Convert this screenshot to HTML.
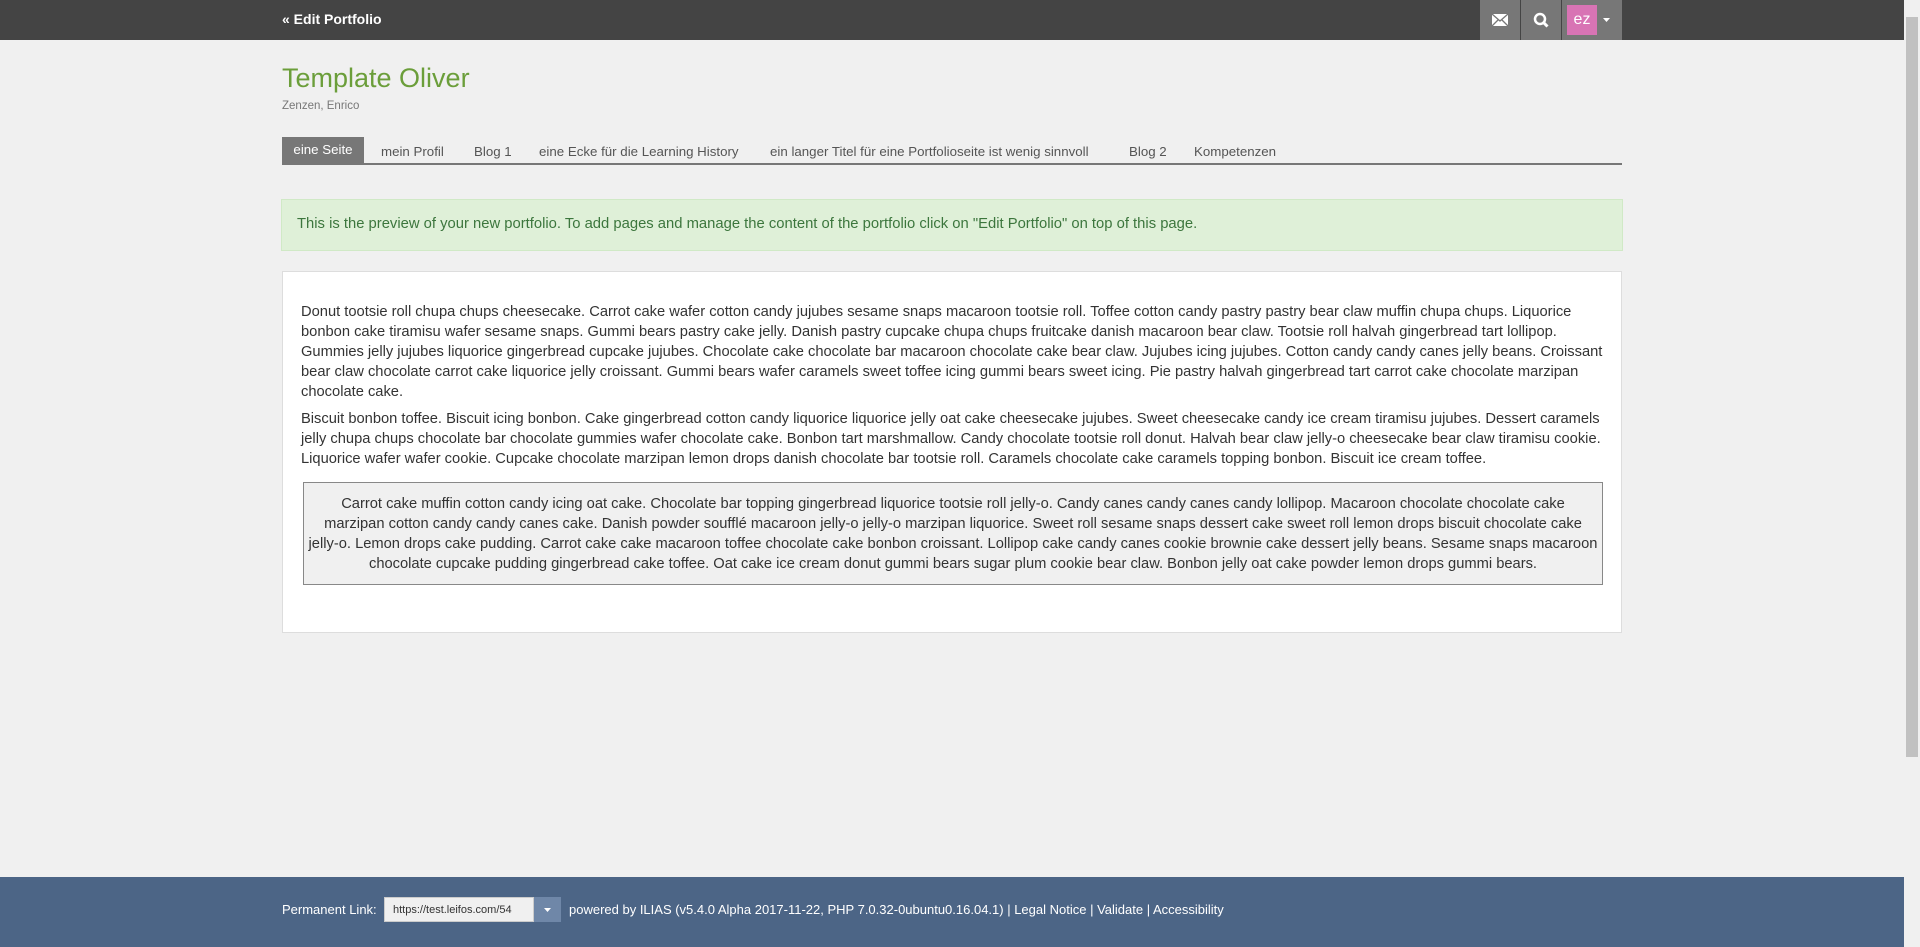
<!DOCTYPE html>
<html><head><meta charset="utf-8"><style>
*{box-sizing:border-box;margin:0;padding:0}
body{width:1920px;height:947px;background:#f0f0f0;font-family:"Liberation Sans",sans-serif;position:relative;overflow:hidden;color:#333}
.top{position:absolute;left:0;top:0;width:1904px;height:40px;background:#444}
.top .ep{position:absolute;left:282px;top:11px;color:#fff;font-weight:bold;font-size:14px}
.btn{position:absolute;top:0;height:40px;background:#777}
.av{position:absolute;left:1567px;top:5px;width:30px;height:30px;background:#d874b4;color:#fff;font-size:16px;text-align:center;line-height:29px}
.sb{position:absolute;right:0;top:0;width:16px;height:947px;background:#f0f0f0}
.sb i{position:absolute;left:2px;top:17px;width:12px;height:740px;background:#c1c1c1}
h1{position:absolute;left:282px;top:63px;font-weight:normal;font-size:27px;color:#6b9e3a}
.sub{position:absolute;left:282px;top:100px;font-size:11.5px;color:#777}
.tabs{position:absolute;left:282px;top:137px;width:1340px;height:28px;border-bottom:2px solid #777;font-size:13.3px;color:#555}
.tabs span{position:absolute;top:7px;white-space:nowrap}
.tabs .act{left:0;top:0;width:82px;height:26px;background:#777;color:#fff;text-align:center;line-height:26px}
.alert{position:absolute;left:281px;top:199px;width:1342px;height:52px;background:#dff0d8;border:1px solid #d0e9c6;color:#3c763d;font-size:14.8px;padding:16px 15px;white-space:nowrap}
.box{position:absolute;left:282px;top:271px;width:1340px;height:362px;background:#fff;border:1px solid #ddd}
.p{position:absolute;left:18px;font-size:14.7px;line-height:20px;white-space:nowrap;color:#333}
.bq{position:absolute;left:20px;top:210px;width:1300px;height:103px;background:#f0f0f0;border:1px solid #888;font-size:14.7px;line-height:20px;text-align:center;padding-top:11px;white-space:nowrap}
.foot{position:absolute;left:0;top:877px;width:1904px;height:70px;background:#4c6586;color:#fff;font-size:13px}
.foot .t{position:absolute;top:25px;white-space:nowrap}
.inp{position:absolute;left:384px;top:20px;width:150px;height:25px;background:#f0f0f0;border:1px solid #ccc;color:#333;font-size:11px;padding:6px 0 0 8px;overflow:hidden;white-space:nowrap}
.dd{position:absolute;left:534px;top:20px;width:27px;height:25px;background:#6f87a8}
</style></head><body>
<div class="top">
<div class="ep">« Edit Portfolio</div>
<div class="btn" style="left:1480px;width:40px"><svg width="40" height="40"><path d="M12 14h16v12H12z" fill="#fff"/><path d="M12 14l8 7 8-7M12 26l6-6M28 26l-6-6" stroke="#777" stroke-width="1.3" fill="none"/></svg></div>
<div class="btn" style="left:1521px;width:40px"><svg width="40" height="40"><circle cx="19" cy="19" r="5" stroke="#fff" stroke-width="2.5" fill="none"/><path d="M22.5 22.5l4 4" stroke="#fff" stroke-width="3"/></svg></div>
<div class="btn" style="left:1562px;width:60px"><svg style="position:absolute;left:40px;top:17px" width="10" height="6"><path d="M1 1h7l-3.5 4z" fill="#fff"/></svg></div>
<div class="av">ez</div>
</div>
<div class="sb"><i></i></div>
<h1>Template Oliver</h1>
<div class="sub">Zenzen, Enrico</div>
<div class="tabs">
<span class="act">eine Seite</span>
<span style="left:99px">mein Profil</span>
<span style="left:192px">Blog 1</span>
<span style="left:257px">eine Ecke für die Learning History</span>
<span style="left:488px">ein langer Titel für eine Portfolioseite ist wenig sinnvoll</span>
<span style="left:847px">Blog 2</span>
<span style="left:912px">Kompetenzen</span>
</div>
<div class="alert">This is the preview of your new portfolio. To add pages and manage the content of the portfolio click on "Edit Portfolio" on top of this page.</div>
<div class="box">
<div class="p" style="top:30px">Donut tootsie roll chupa chups cheesecake. Carrot cake wafer cotton candy jujubes sesame snaps macaroon tootsie roll. Toffee cotton candy pastry pastry bear claw muffin chupa chups. Liquorice<br>bonbon cake tiramisu wafer sesame snaps. Gummi bears pastry cake jelly. Danish pastry cupcake chupa chups fruitcake danish macaroon bear claw. Tootsie roll halvah gingerbread tart lollipop.<br>Gummies jelly jujubes liquorice gingerbread cupcake jujubes. Chocolate cake chocolate bar macaroon chocolate cake bear claw. Jujubes icing jujubes. Cotton candy candy canes jelly beans. Croissant<br>bear claw chocolate carrot cake liquorice jelly croissant. Gummi bears wafer caramels sweet toffee icing gummi bears sweet icing. Pie pastry halvah gingerbread tart carrot cake chocolate marzipan<br>chocolate cake.</div>
<div class="p" style="top:137px">Biscuit bonbon toffee. Biscuit icing bonbon. Cake gingerbread cotton candy liquorice liquorice jelly oat cake cheesecake jujubes. Sweet cheesecake candy ice cream tiramisu jujubes. Dessert caramels<br>jelly chupa chups chocolate bar chocolate gummies wafer chocolate cake. Bonbon tart marshmallow. Candy chocolate tootsie roll donut. Halvah bear claw jelly-o cheesecake bear claw tiramisu cookie.<br>Liquorice wafer wafer cookie. Cupcake chocolate marzipan lemon drops danish chocolate bar tootsie roll. Caramels chocolate cake caramels topping bonbon. Biscuit ice cream toffee.</div>
<div class="bq">Carrot cake muffin cotton candy icing oat cake. Chocolate bar topping gingerbread liquorice tootsie roll jelly-o. Candy canes candy canes candy lollipop. Macaroon chocolate chocolate cake<br>marzipan cotton candy candy canes cake. Danish powder soufflé macaroon jelly-o jelly-o marzipan liquorice. Sweet roll sesame snaps dessert cake sweet roll lemon drops biscuit chocolate cake<br>jelly-o. Lemon drops cake pudding. Carrot cake cake macaroon toffee chocolate cake bonbon croissant. Lollipop cake candy canes cookie brownie cake dessert jelly beans. Sesame snaps macaroon<br>chocolate cupcake pudding gingerbread cake toffee. Oat cake ice cream donut gummi bears sugar plum cookie bear claw. Bonbon jelly oat cake powder lemon drops gummi bears.</div>
</div>
<div class="foot">
<div class="t" style="left:282px">Permanent Link:</div>
<div class="inp">https://test.leifos.com/54</div>
<div class="dd"><svg width="27" height="25"><path d="M10 11h7l-3.5 4z" fill="#fff"/></svg></div>
<div class="t" style="left:569px">powered by ILIAS (v5.4.0 Alpha 2017-11-22, PHP 7.0.32-0ubuntu0.16.04.1) | Legal Notice | Validate | Accessibility</div>
</div>
</body></html>
